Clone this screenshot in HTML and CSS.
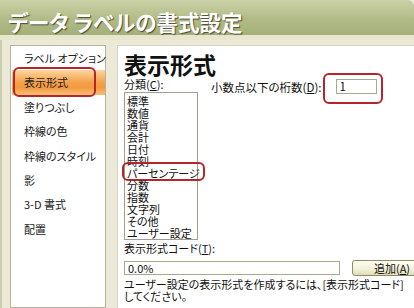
FILE: index.html
```html
<!DOCTYPE html>
<html lang="ja">
<head>
    <meta charset="UTF-8">
    <title>データ ラベルの書式設定</title>
    <link rel="stylesheet" href="styles.css">
</head>
<body>
    <div class="titlebar">データ ラベルの書式設定</div>
    <div class="strip"></div>

    <div class="main">
        <ul class="nav">
            <li>ラベル オプション</li>
            <li class="active">表示形式<span class="mark mark-nav"></span></li>
            <li>塗りつぶし</li>
            <li>枠線の色</li>
            <li>枠線のスタイル</li>
            <li>影</li>
            <li>3-D 書式</li>
            <li>配置</li>
        </ul>

        <div class="pane">
            <h1>表示形式</h1>
            <div class="cols">
                <div class="cat">
                    <div class="label">分類(<u>C</u>):</div>
                    <ul class="listbox">
                        <li>標準</li>
                        <li>数値</li>
                        <li>通貨</li>
                        <li>会計</li>
                        <li>日付</li>
                        <li>時刻</li>
                        <li class="picked">パーセンテージ<span class="mark mark-list"></span></li>
                        <li>分数</li>
                        <li>指数</li>
                        <li>文字列</li>
                        <li>その他</li>
                        <li>ユーザー設定</li>
                    </ul>
                </div>
                <div class="digits">
                    <span>小数点以下の桁数(<u>D</u>):</span>
                    <span class="spin">1<span class="mark mark-spin"></span></span>
                </div>
            </div>

            <div class="label code-label">表示形式コード(<u>T</u>):</div>
            <div class="code-row">
                <div class="field">0.0%</div>
                <div class="btn">追加(<u>A</u>)</div>
            </div>
            <p class="note">ユーザー設定の表示形式を作成するには、[表示形式コード]<br>してください。</p>
        </div>
    </div>
</body>
</html>
```

FILE: styles.css
```css
body {
    margin: 0;
    width: 414px;
    height: 308px;
    overflow: hidden;
    background-color: #ece9d8;
    color: #111;
    font-family: "Noto Sans CJK JP", "Liberation Sans", sans-serif;
    font-size: 11px;
    font-feature-settings: "palt";
}

.titlebar {
    box-sizing: border-box;
    height: 35px;
    padding: 10px 0 0 8px;
    line-height: 24px;
    font-size: 21.5px;
    font-weight: bold;
    color: #fff;
    text-shadow: 1px 1px 1px #4a4c36;
    background: linear-gradient(to bottom, #cbd2a8, #b1bb86 55%, #a5af7a);
    border-top-right-radius: 6px;
    white-space: nowrap;
}

.strip {
    height: 5px;
    background-color: #e6e7cd;
}

.main {
    display: flex;
    gap: 11px;
    padding: 5px 0 0 8px;
    border-left: 2px solid #c8ceab;
}

ul {
    list-style: none;
    margin: 0;
    padding: 0;
}

.nav {
    width: 94px;
    height: 261px;
    background-color: #fff;
    border: 1px solid #b6b59c;
    flex-shrink: 0;
}

.nav li {
    position: relative;
    height: 24.4px;
    line-height: 24.4px;
    padding-left: 13px;
    white-space: nowrap;
    color: #222;
}

.nav li.active {
    margin-left: 1px;
    padding-left: 12px;
    background: linear-gradient(to bottom, #fbd6a0, #f5a04a 50%, #f39a3f 70%, #f8bd78);
}

.mark {
    position: absolute;
    border: 2px solid #b3262c;
    border-radius: 6px;
}

.mark-nav {
    left: 1px;
    top: -3px;
    width: 79px;
    height: 26px;
}

.pane {
    width: 310px;
    height: 262px;
    flex-shrink: 0;
    padding-left: 6px;
    background-color: #fff;
    border-left: 1px solid #d6d4c2;
    border-top: 1px solid #d6d4c2;
}

h1 {
    margin: 6px 0 0;
    font-size: 23px;
    line-height: 24px;
    font-weight: bold;
}

.cols {
    display: flex;
    gap: 13px;
}

.label {
    line-height: 14px;
    margin-top: 1px;
}

.listbox {
    box-sizing: border-box;
    width: 74px;
    height: 148px;
    margin-top: 1px;
    padding: 2px 0 0 2px;
    border: 1px solid #9fa08c;
}

.listbox li {
    position: relative;
    line-height: 12px;
    height: 12px;
    white-space: nowrap;
}

.mark-list {
    left: -5px;
    top: -5px;
    width: 79px;
    height: 15px;
}

.digits {
    display: flex;
    align-items: center;
    gap: 14px;
    margin-top: 3px;
    height: 15px;
    font-size: 11.5px;
    white-space: nowrap;
}

.spin {
    position: relative;
    box-sizing: border-box;
    width: 41px;
    height: 15px;
    line-height: 13px;
    padding-left: 3px;
    border: 1px solid #a4ab8c;
}

.mark-spin {
    left: -14px;
    top: -7px;
    width: 56px;
    height: 27px;
}

.code-label {
    margin-top: 1px;
}

.code-row {
    display: flex;
    align-items: center;
    gap: 12px;
    margin-top: 5px;
}

.field {
    box-sizing: border-box;
    width: 216px;
    height: 14px;
    line-height: 12px;
    padding-left: 3px;
    border: 1px solid #a4ab8c;
}

.btn {
    box-sizing: border-box;
    width: 80px;
    height: 16px;
    line-height: 14px;
    text-align: center;
    border: 1px solid #8d8c6a;
    border-radius: 3px;
    background: linear-gradient(to bottom, #fffef4, #f2efd6 60%, #e0dcb8);
}

.note {
    margin: 2px 0 0;
    line-height: 12px;
    white-space: nowrap;
}
```
